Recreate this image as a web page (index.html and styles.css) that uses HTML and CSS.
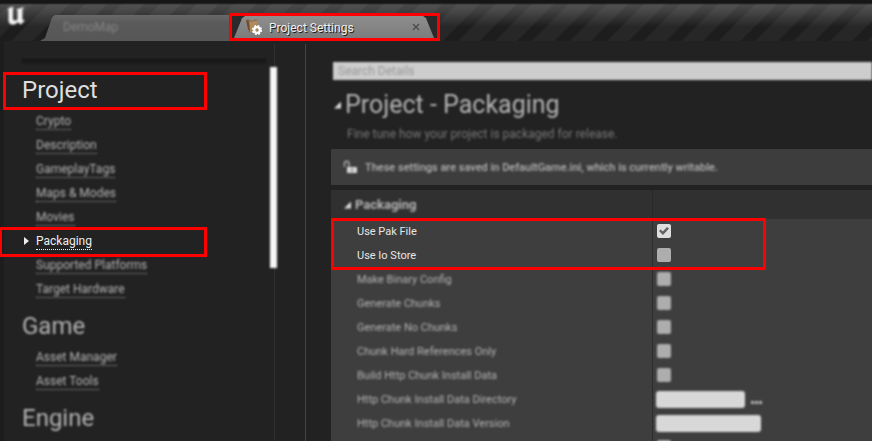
FILE: index.html
```html
<!DOCTYPE html>
<html lang="en">
<head>
<meta charset="utf-8">
<title>Project Settings</title>
<link rel="stylesheet" href="styles.css">
</head>
<body>
<header class="titlebar">
  <svg class="logo soft" viewBox="0 0 20 20" aria-hidden="true">
    <path d="M1 4 C3 1.600 5.500 1 8 .8 C6.800 1.800 6.900 3 6.900 4.500 V12.500 C6.900 14.500 9 15.200 11.500 13.500 V4.500 L10.300 3 C13 3 15.500 2 18.500 .5 C16.800 2.300 16.400 3.500 16.400 5 V12.800 C16.400 14.500 17.500 14.600 19 13.300 C18.200 15.800 16.600 17.200 14.400 18.400 L11.800 16 C10.300 18 8 19 5.800 18.600 C3.600 18.100 2.500 16.500 2.500 14 V5 C2.500 3.800 2 3.600 1 4 Z" fill="#f4f4f4"/>
  </svg>
  <nav class="tabs">
    <a class="tab tab-idle" href="#map"><span class="soft">DemoMap</span></a>
    <div class="tab-frame">
      <div class="tab tab-active">
        <svg class="tab-icon" viewBox="0 0 18 18" aria-hidden="true">
          <path d="M1 2 L3 1 L6 3 L11 1.500 L13 2.500 L12 13 L5 14.500 Z" fill="#8b6742"/>
          <path d="M4 4 L13 2.500 L12 13 L5 14.500 Z" fill="#b08a5c"/>
          <path d="M1 2 L4 4 L5 14.500 L3 11 Z" fill="#6d4c2c"/>
          <circle cx="12" cy="12" r="2.800" fill="none" stroke="#fff" stroke-width="2.200"/>
          <circle cx="12" cy="12" r="4.200" fill="none" stroke="#fff" stroke-width="1.800" stroke-dasharray="1.900 1.400"/>
        </svg>
        <span class="tab-title">Project Settings</span>
        <button class="tab-close" type="button" aria-label="Close tab">
          <svg viewBox="0 0 8 8" aria-hidden="true"><path d="M1 1 L7 7 M7 1 L1 7" stroke="#4a4a4a" stroke-width="1.200"/></svg>
        </button>
      </div>
    </div>
  </nav>
</header>
<div class="workspace">
  <aside class="sidebar">
    <div class="sidebar-edge soft"></div>
    <section class="group">
      <h2 class="group-title framed">Project</h2>
      <ul class="links">
        <li><a class="soft" href="#crypto">Crypto</a></li>
        <li><a class="soft" href="#description">Description</a></li>
        <li><a class="soft" href="#tags">GameplayTags</a></li>
        <li><a class="soft" href="#maps">Maps &amp; Modes</a></li>
        <li><a class="soft" href="#movies">Movies</a></li>
        <li class="current framed"><a href="#packaging">Packaging</a></li>
        <li><a class="soft" href="#platforms">Supported Platforms</a></li>
        <li><a class="soft" href="#hardware">Target Hardware</a></li>
      </ul>
    </section>
    <section class="group">
      <h2 class="group-title soft">Game</h2>
      <ul class="links">
        <li><a class="soft" href="#asset-manager">Asset Manager</a></li>
        <li><a class="soft" href="#asset-tools">Asset Tools</a></li>
      </ul>
    </section>
    <section class="group">
      <h2 class="group-title soft">Engine</h2>
    </section>
  </aside>
  <div class="scroll"><div class="thumb soft"></div></div>
  <main class="details">
    <input class="search soft" type="search" placeholder="Search Details" aria-label="Search Details">
    <h1 class="page-title soft"><i class="arrow"></i>Project - Packaging</h1>
    <p class="lead soft">Fine tune how your project is packaged for release.</p>
    <div class="notice">
      <svg class="lock soft" viewBox="0 0 14 14" aria-hidden="true">
        <path d="M1.500 7 V3.500 C1.500 .5 6 .5 6 3.500 V7" fill="none" stroke="#aaa" stroke-width="1.500"/>
        <path d="M4 7 H14 V13 H4 Z" fill="#d8d8d8"/>
        <path d="M8.500 8.500 H9.500 V11.500 H8.500 Z" fill="#444"/>
      </svg>
      <span class="soft">These settings are saved in DefaultGame.ini, which is currently writable.</span>
    </div>
    <form class="panel">
      <h3 class="panel-title"><span class="soft"><i class="arrow"></i>Packaging</span></h3>
      <div class="rows framed">
        <div class="row"><label for="pak">Use Pak File</label><div class="value"><input id="pak" type="checkbox" checked></div></div>
        <div class="row"><label for="io">Use Io Store</label><div class="value"><input id="io" type="checkbox"></div></div>
      </div>
      <div class="rows blurred">
        <div class="row"><label for="binary">Make Binary Config</label><div class="value"><input id="binary" type="checkbox"></div></div>
        <div class="row"><label for="chunks">Generate Chunks</label><div class="value"><input id="chunks" type="checkbox"></div></div>
        <div class="row"><label for="nochunks">Generate No Chunks</label><div class="value"><input id="nochunks" type="checkbox"></div></div>
        <div class="row"><label for="hard">Chunk Hard References Only</label><div class="value"><input id="hard" type="checkbox"></div></div>
        <div class="row"><label for="build">Build Http Chunk Install Data</label><div class="value"><input id="build" type="checkbox"></div></div>
        <div class="row"><label for="dir">Http Chunk Install Data Directory</label><div class="value"><input id="dir" class="text text-short" type="text"><button class="browse" type="button" aria-label="Browse"><i></i><i></i><i></i></button></div></div>
        <div class="row"><label for="version">Http Chunk Install Data Version</label><div class="value"><input id="version" class="text" type="text"></div></div>
        <div class="row"><div></div><div class="value"><input type="checkbox" aria-label="Compressed"></div></div>
      </div>
    </form>
  </main>
</div>
</body>
</html>
```
FILE: styles.css
```css
*, *::before, *::after { box-sizing: border-box; }

body {
  margin: 0;
  height: 100vh;
  overflow: hidden;
  display: flex;
  flex-direction: column;
  background: #222;
  color: #b4b4b4;
  font: 12px/16px Roboto, "Liberation Sans", sans-serif;
}

h1, h2, h3, p, ul { margin: 0; padding: 0; font-weight: 400; }
ul { list-style: none; }
a { color: inherit; text-decoration: none; }
button { border: 0; padding: 0; background: none; }

.soft { filter: blur(1px); }

/* Red callout drawn over the element it belongs to */
.framed { position: relative; }
.framed::after {
  content: "";
  position: absolute;
  border: 3px solid #f00;
  pointer-events: none;
}

/* Title bar */
.titlebar {
  flex: none;
  display: flex;
  height: 41px;
  background:
    linear-gradient(#161616 0 3px, transparent 5px),
    linear-gradient(rgba(255, 255, 255, .2) 4px, rgba(255, 255, 255, .16) 10px, transparent 27px),
    repeating-linear-gradient(135deg, #1d1d1d 0 9px, #272727 11px 25px, #1d1d1d 27px 36px, #272727 38px 51px, #1d1d1d 53px 62px, #272727 64px 78px, #1d1d1d 79px);
}
.logo { width: 20px; height: 20px; margin: 6px 0 0 6px; }
.tabs { flex: 1; display: flex; align-items: flex-end; margin-left: 14px; }
.tab { display: flex; align-items: center; }
.tab-idle {
  width: 199px;
  height: 26px;
  margin-right: -10px;
  padding: 0 0 2px 23px;
  color: #858585;
  background: linear-gradient(#686868, #5a5a5a 8px, #575757);
  clip-path: polygon(0 100%, 5px 88%, 12px 10%, 15px 0, calc(100% - 9px) 0, calc(100% - 5px) 10%, 100% 50%, 100% 100%);
}
.tab-frame { position: relative; width: 211px; border: 3px solid #f00; background: #2a2a2a; }
.tab-active {
  height: 22px;
  margin: 0 3px 0 2px;
  padding: 0 9px 0 11px;
  color: #eee;
  text-shadow: 1px 1px 0 #222;
  background: linear-gradient(#8e8e8e, #7c7c7c);
  clip-path: polygon(0 100%, 8px 10%, 11px 0, calc(100% - 11px) 0, calc(100% - 8px) 10%, 100% 100%);
}
.tab-icon { width: 18px; height: 18px; margin-right: 6px; }
.tab-title { flex: 1; padding-top: 1px; }
.tab-close { width: 8px; height: 8px; margin-right: 5px; display: flex; }
.tab-close svg { width: 8px; height: 8px; }

/* Sidebar */
.workspace { flex: 1; min-height: 0; display: flex; border-left: 4px solid #1d1d1d; }
.sidebar { flex: none; width: 262px; padding: 18px 0 0 18px; }
.sidebar-edge { height: 6px; background: linear-gradient(#121212, #222); }
.group-title {
  height: 44px;
  padding-top: 6px;
  font-size: 24px;
  line-height: 38px;
}
.group-title.framed { color: #dedede; }
.group-title.framed::after { left: -19px; top: 7px; width: 204px; height: 38px; }
.links li { height: 24px; padding: 4px 0 0 14px; }
.links a { display: inline-block; line-height: 15px; border-bottom: 1px dotted #aaa; }
.links .current { color: #eee; }
.current a { border-color: #eee; }
.current::before {
  content: "";
  position: absolute;
  left: 2px;
  top: 8px;
  width: 5px;
  height: 8px;
  background: #eee;
  clip-path: polygon(0 0, 100% 50%, 0 100%);
}
.current.framed::after { left: -23px; top: -2px; width: 208px; height: 30px; }

.scroll {
  flex: none;
  width: 40px;
  margin-top: 3px;
  padding: 23px 0 0 4px;
  border-right: 1px solid #444;
  background: linear-gradient(#303030, #303030) 8px 0 / 1px 100% no-repeat;
}
.thumb { width: 7px; height: 201px; background: #f6f6f6; }

/* Details */
.details { flex: 1; min-width: 0; padding: 21px 0 0 25px; }
.search {
  display: block;
  width: calc(100% - 2px);
  height: 18px;
  margin-left: 2px;
  padding: 0 5px;
  border: 0;
  background: #cdcdcd;
  font: inherit;
}
.search::placeholder { color: #999; }
.arrow {
  display: inline-block;
  width: 7px;
  height: 7px;
  background: #ddd;
  clip-path: polygon(100% 0, 100% 100%, 0 100%);
}
.page-title {
  display: flex;
  align-items: center;
  gap: 4px;
  margin-top: 9px;
  padding-left: 3px;
  font-size: 25px;
  line-height: 32px;
}
.lead { margin-top: 5px; padding-left: 16px; color: #777; }
.notice {
  display: flex;
  align-items: center;
  gap: 8px;
  height: 36px;
  margin-top: 7px;
  padding-left: 12px;
  background: #3d3d3d;
  font-size: 11px;
  font-weight: 500;
}
.notice span { padding-top: 2px; }
.lock { width: 14px; height: 14px; }
.panel { margin-top: 5px; background: #3e3e3e; font-size: 11px; }
.panel-title {
  height: 29px;
  padding: 7px 0 0 13px;
  background: linear-gradient(90deg, transparent 321px, #292929 321px 322px, transparent 322px), #303030;
  font-size: 13px;
  font-weight: 700;
}
.panel-title span { display: flex; align-items: center; gap: 4px; }
.rows { background: linear-gradient(#2c2c2c, #2c2c2c) 321px 0 / 1px 100% no-repeat; }
.rows.framed { color: #e6e6e6; }
.rows.framed::after { left: 0; top: -1px; width: 435px; height: 52px; z-index: 1; }
.row {
  display: grid;
  grid-template-columns: 299px 1fr;
  align-items: center;
  height: 24px;
  padding-left: 26px;
}
.row label { padding-top: 2px; }
.blurred label, .blurred .value { filter: blur(1px); }
.value { display: flex; align-items: center; height: 24px; }
.value input { margin: 0; border: 0; appearance: none; }
.value input[type="checkbox"] {
  width: 14px;
  height: 14px;
  margin-left: 1px;
  border-radius: 2px;
  background: #adadad;
}
.value input[type="checkbox"]:checked { background: #dedede; }
.value input:checked::before {
  content: "";
  display: block;
  width: 10px;
  height: 8px;
  margin: 3px 2px;
  background: #626262;
  clip-path: polygon(0 50%, 18% 32%, 38% 55%, 80% 0, 100% 18%, 40% 100%);
}
.value .text { width: 105px; height: 17px; border-radius: 3px; background: #d8d8d8; }
.value .text-short { width: 89px; }
.browse { display: flex; gap: 1px; margin: 6px 0 0 6px; }
.browse i { width: 3px; height: 3px; background: #b4b4b4; }
```
